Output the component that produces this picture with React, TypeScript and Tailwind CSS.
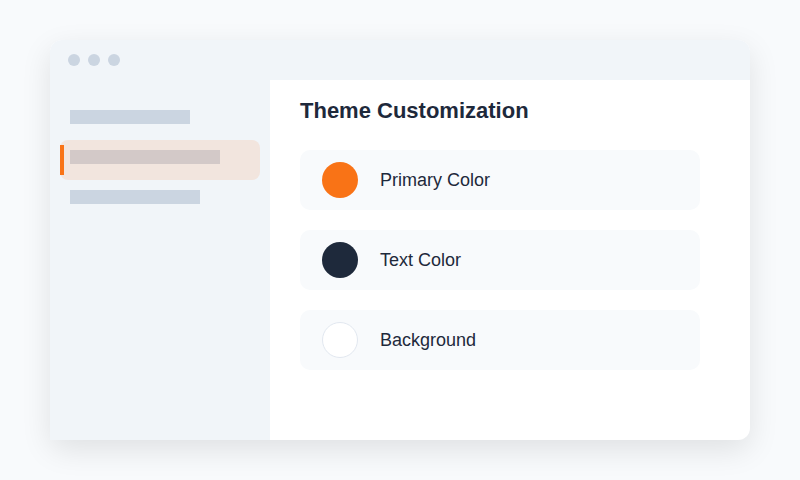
import React from 'react';

const swatches = [
  { label: 'Primary Color', className: 'bg-[#f97316]' },
  { label: 'Text Color', className: 'bg-[#1e293b]' },
  { label: 'Background', className: 'bg-white border border-[#e2e8f0]' },
];

const App: React.FC = () => {
  return (
    <div className="w-[800px] h-[480px] bg-[#f8fafc] pt-10 pl-[50px]" style={{ fontFamily: '"Liberation Sans", Arial, sans-serif' }}>
      <div className="w-[700px] h-[400px] flex flex-col bg-white rounded-xl shadow-[0_10px_30px_rgba(0,0,0,0.1)]">
        {/* title bar */}
        <div className="h-10 shrink-0 flex items-center gap-2 pl-[18px] bg-[#f1f5f9] rounded-t-xl">
          <span className="w-3 h-3 rounded-full bg-[#cbd5e1]" />
          <span className="w-3 h-3 rounded-full bg-[#cbd5e1]" />
          <span className="w-3 h-3 rounded-full bg-[#cbd5e1]" />
        </div>

        <div className="flex flex-1">
          {/* sidebar */}
          <div className="w-[220px] bg-[#f1f5f9] pt-5 px-[10px] flex flex-col">
            <div className="h-10 pt-[10px] px-[10px]">
              <div className="w-[120px] h-[14px] bg-[#cbd5e1]" />
            </div>
            <div className="relative h-10 pt-[10px] px-[10px] rounded-lg bg-[#f2e5de]">
              <span className="absolute left-0 top-[5px] bottom-[5px] w-1 bg-[#f97316]" />
              <div className="w-[150px] h-[14px] bg-[#d3c9c8]" />
            </div>
            <div className="h-10 pt-[10px] px-[10px]">
              <div className="w-[130px] h-[14px] bg-[#cbd5e1]" />
            </div>
          </div>

          {/* content */}
          <div className="flex-1 pt-[17px] px-[30px]">
            <h2 className="text-[22px] leading-[28px] font-bold text-[#1e293b]">Theme Customization</h2>
            <div className="mt-[25px] flex flex-col gap-5 w-[400px]">
              {swatches.map(s => (
                <div key={s.label} className="h-[60px] flex items-center gap-[22px] pl-[22px] rounded-[10px] bg-[#f8fafc]">
                  <span className={`w-9 h-9 rounded-full box-border ${s.className}`} />
                  <span className="text-[18px] text-[#1e293b]">{s.label}</span>
                </div>
              ))}
            </div>
          </div>
        </div>
      </div>
    </div>
  );
};

export default App;
